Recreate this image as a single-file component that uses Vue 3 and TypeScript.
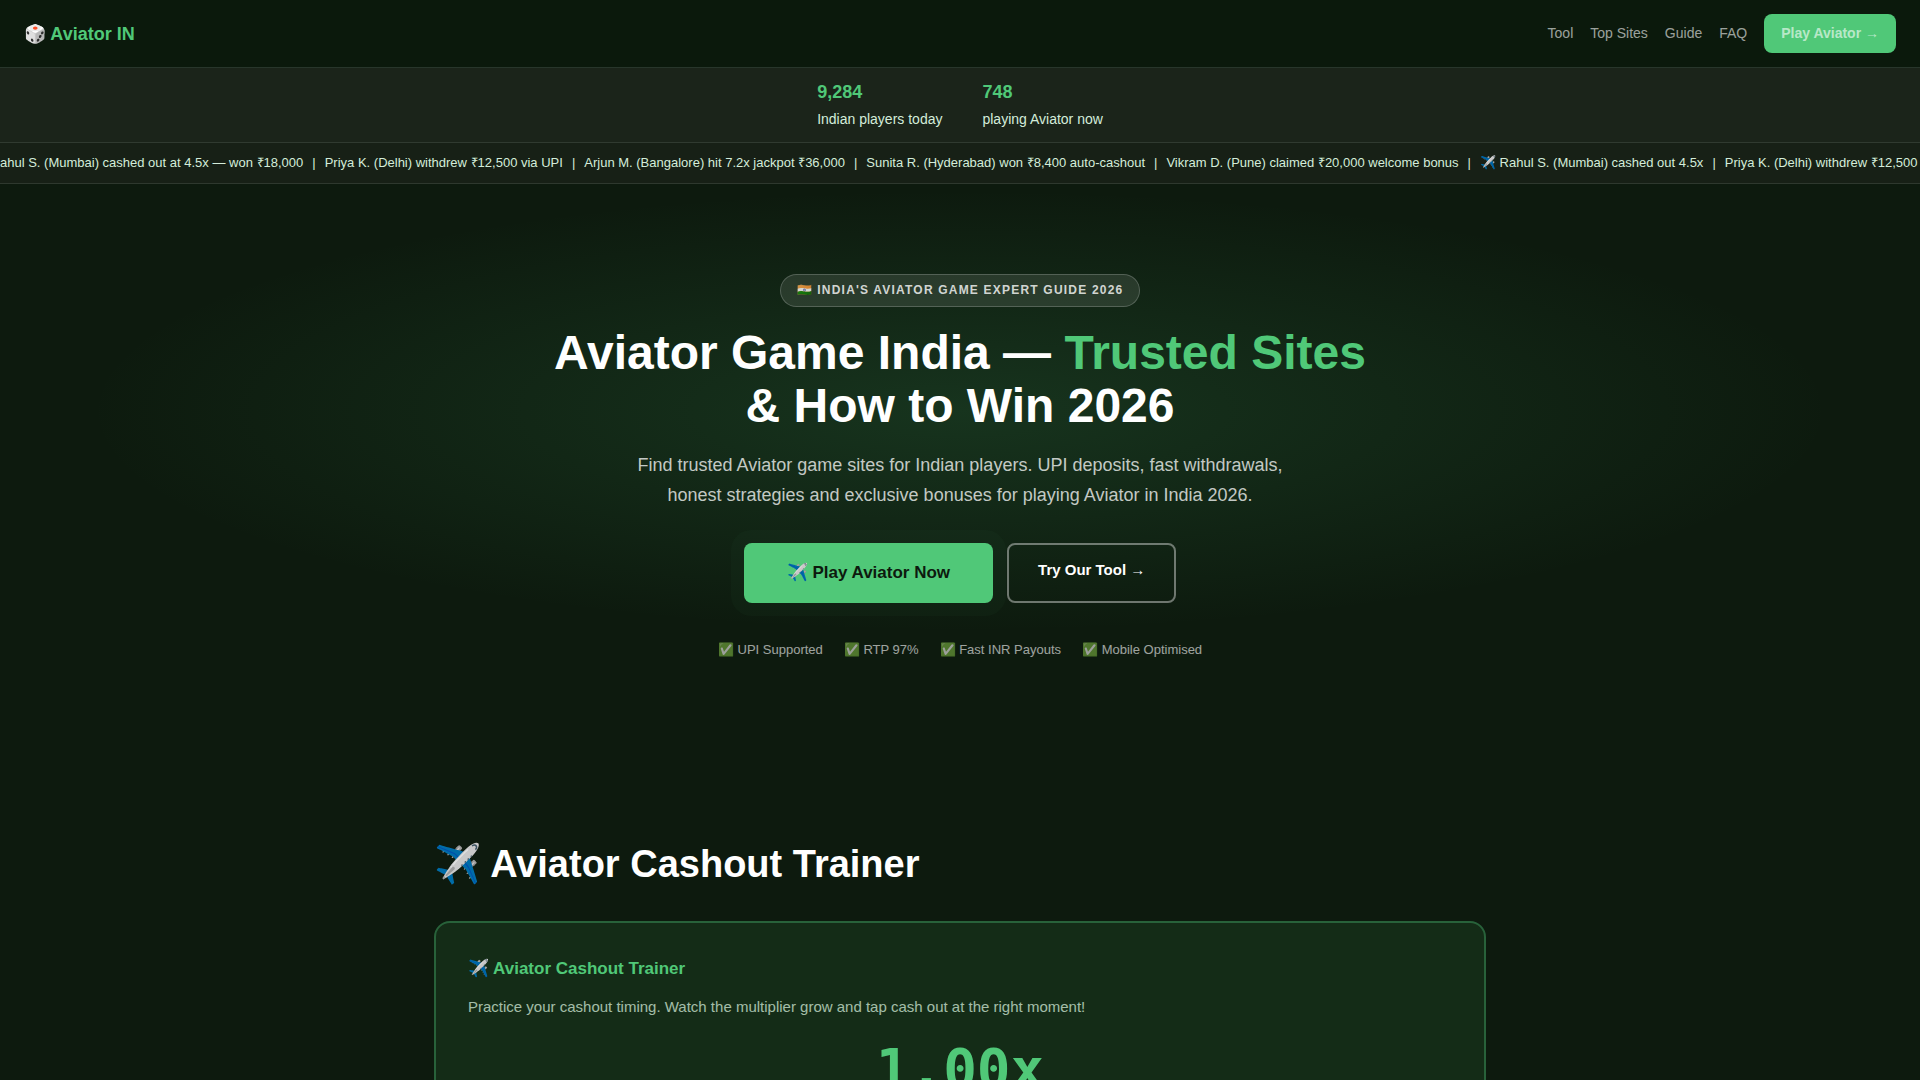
<script setup lang="ts">
import { ref } from 'vue'

interface Stat {
  value: string
  label: string
}

const navLinks: { label: string; href: string }[] = [
  { label: 'Tool', href: '#tool' },
  { label: 'Top Sites', href: '#sites' },
  { label: 'Guide', href: '#guide' },
  { label: 'FAQ', href: '#faq' },
]

const stats: Stat[] = [
  { value: '9,284', label: 'Indian players today' },
  { value: '748', label: 'playing Aviator now' },
]

const tickerItems: string[] = [
  '✈️ Rahul S. (Mumbai) cashed out at 4.5x — won ₹18,000',
  'Priya K. (Delhi) withdrew ₹12,500 via UPI',
  'Arjun M. (Bangalore) hit 7.2x jackpot ₹36,000',
  'Sunita R. (Hyderabad) won ₹8,400 auto-cashout',
  'Vikram D. (Pune) claimed ₹20,000 welcome bonus',
  '✈️ Rahul S. (Mumbai) cashed out 4.5x',
  'Priya K. (Delhi) withdrew ₹12,500',
]
const tickerShift = ref(29)

const trustPoints: string[] = ['UPI Supported', 'RTP 97%', 'Fast INR Payouts', 'Mobile Optimised']

const multiplier = ref(1)
</script>

<template>
  <div class="page">
    <header class="nav">
      <a class="logo" href="#top">🎲 Aviator IN</a>
      <nav class="nav-links">
        <a v-for="link in navLinks" :key="link.href" class="nav-link" :href="link.href">{{ link.label }}</a>
        <a class="nav-link nav-cta" href="#play">Play Aviator →</a>
      </nav>
    </header>

    <div class="stats">
      <div v-for="stat in stats" :key="stat.label" class="stat">
        <strong class="stat-value">{{ stat.value }}</strong>
        <span class="stat-label">{{ stat.label }}</span>
      </div>
    </div>

    <div class="ticker">
      <div class="ticker-track" :style="{ transform: `translateX(-${tickerShift}px)` }">
        <template v-for="(item, i) in tickerItems" :key="i">
          <span v-if="i > 0">|</span>
          <span>{{ item }}</span>
        </template>
      </div>
    </div>

    <main>
      <section id="top" class="hero">
        <span class="badge">🇮🇳 India's Aviator Game Expert Guide 2026</span>
        <h1 class="hero-title">
          Aviator Game India — <span class="accent">Trusted Sites</span><br />&amp; How to Win 2026
        </h1>
        <p class="hero-text">
          Find trusted Aviator game sites for Indian players. UPI deposits, fast withdrawals, honest
          strategies and exclusive bonuses for playing Aviator in India 2026.
        </p>
        <div class="actions">
          <a class="btn btn-primary" href="#play">✈️ Play Aviator Now</a>
          <a class="btn btn-outline" href="#tool">Try Our Tool →</a>
        </div>
        <ul class="trust">
          <li v-for="point in trustPoints" :key="point">✅ {{ point }}</li>
        </ul>
      </section>

      <section id="tool" class="tool">
        <h2 class="tool-title">✈️ Aviator Cashout Trainer</h2>
        <div class="card">
          <h3 class="card-title">✈️ Aviator Cashout Trainer</h3>
          <p class="card-text">
            Practice your cashout timing. Watch the multiplier grow and tap cash out at the right moment!
          </p>
          <div class="multiplier">{{ multiplier.toFixed(2) }}x</div>
        </div>
      </section>
    </main>
  </div>
</template>

<style>
body {
  margin: 0;
  background: #0d1a0e;
}
</style>

<style scoped>
.page {
  font-family: 'Liberation Sans', Arial, sans-serif;
  font-size: 16px;
  line-height: 1.7;
  color: #d4edda;
  background: #0d1a0e;
  overflow: hidden;
}

.nav {
  display: flex;
  align-items: center;
  justify-content: space-between;
  padding: 14px 24px;
  border-bottom: 1px solid #28362b;
  background: #0b190c;
}

.logo {
  font-size: 18px;
  font-weight: 700;
  line-height: 30px;
  color: #50c878;
  text-decoration: none;
}

.nav-links {
  display: flex;
  align-items: center;
  gap: 17px;
}

.nav-link {
  font-size: 14px;
  line-height: 23px;
  color: rgba(255, 255, 255, 0.6);
  text-decoration: none;
}

.nav-cta {
  padding: 8px 17px;
  border-radius: 8px;
  font-weight: 700;
  background: #50c878;
}

.stats {
  display: flex;
  justify-content: center;
  gap: 40px;
  padding: 9px 24px 11px;
  border-bottom: 1px solid #303a30;
  background: #1b241a;
}

.stat {
  display: flex;
  flex-direction: column;
  font-size: 14px;
  line-height: 24px;
}

.stat-value {
  font-size: 18px;
  line-height: 30px;
  color: #50c878;
}

.ticker {
  padding: 9px 0;
  border-bottom: 1px solid #2e382e;
  background: #172016;
  overflow: hidden;
}

.ticker-track {
  display: flex;
  gap: 9px;
  font-size: 13px;
  line-height: 22px;
  white-space: nowrap;
}

.hero {
  display: flex;
  flex-direction: column;
  align-items: center;
  padding: 90px 24px;
  text-align: center;
  background: radial-gradient(ellipse 70% 60% at 50% 40%, rgba(80, 200, 120, 0.15), transparent 65%);
}

.badge {
  padding: 5px 16px;
  border: 1px solid rgba(255, 255, 255, 0.2);
  border-radius: 20px;
  font-size: 12px;
  font-weight: 700;
  line-height: 21px;
  letter-spacing: 0.1em;
  text-transform: uppercase;
  color: rgba(255, 255, 255, 0.8);
  background: rgba(255, 255, 255, 0.1);
}

.hero-title {
  margin: 19px 0 18px;
  font-size: 48px;
  font-weight: 700;
  line-height: 53px;
  color: #fff;
}

.accent {
  color: #50c878;
}

.hero-text {
  max-width: 660px;
  margin: 0 0 33px;
  font-size: 18px;
  line-height: 30px;
  color: rgba(255, 255, 255, 0.75);
}

.actions {
  display: flex;
  flex-wrap: wrap;
  justify-content: center;
  gap: 14px;
}

.btn {
  border-radius: 8px;
  font-weight: 700;
  text-decoration: none;
}

.btn-primary {
  padding: 16px 43px;
  font-size: 17px;
  line-height: 28px;
  color: #0d1a0e;
  background: #50c878;
  box-shadow: 0 0 0 13px rgba(80, 200, 120, 0.03);
}

.btn-outline {
  padding: 12px 29px;
  border: 2px solid rgba(255, 255, 255, 0.4);
  font-size: 15px;
  line-height: 26px;
  color: #fff;
}

.trust {
  display: flex;
  flex-wrap: wrap;
  justify-content: center;
  gap: 21px;
  margin: 36px 0 0;
  padding: 0;
  list-style: none;
  font-size: 13px;
  line-height: 22px;
  color: #fff;
  opacity: 0.6;
}

.tool {
  max-width: 1052px;
  margin: 0 auto;
  padding: 80px 24px;
}

.tool-title {
  margin: 0 0 24px;
  font-size: 38px;
  font-weight: 700;
  line-height: 66px;
  color: #fff;
}

.card {
  padding: 32px;
  border: 2px solid #28623a;
  border-radius: 16px;
  background: #142c17;
}

.card-title {
  margin: 0 0 11px;
  font-size: 17px;
  font-weight: 700;
  line-height: 28px;
  color: #50c878;
}

.card-text {
  margin: 0 0 16px;
  font-size: 15px;
  line-height: 26px;
  opacity: 0.75;
}

.multiplier {
  font-family: 'DejaVu Sans Mono', monospace;
  font-size: 56px;
  font-weight: 700;
  line-height: 66px;
  text-align: center;
  color: #50c878;
}
</style>
